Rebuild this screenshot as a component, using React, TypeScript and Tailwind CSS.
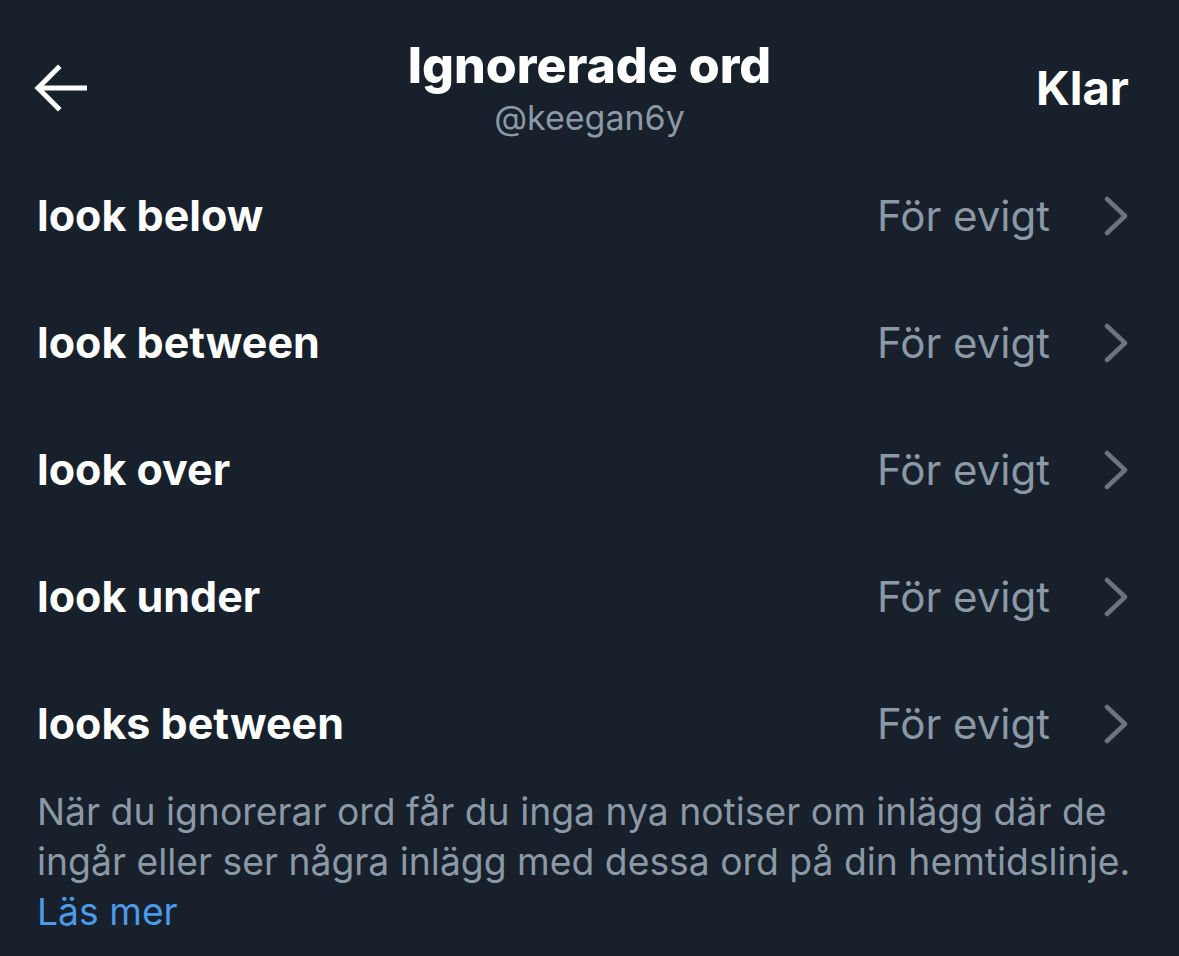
const words = ['look below', 'look between', 'look over', 'look under', 'looks between']

function BackArrow() {
  return (
    <svg width="56" height="48" viewBox="0 0 56 48" fill="none" className="text-white">
      <path d="M4 24H54" stroke="currentColor" strokeWidth="5" />
      <path d="M25 4L5 24L25 44" stroke="currentColor" strokeWidth="5" strokeLinecap="square" />
    </svg>
  )
}

function Chevron() {
  return (
    <svg width="26" height="40" viewBox="0 0 26 40" fill="none" className="text-[#6b7580]">
      <path
        d="M4 3L22 20L4 37"
        stroke="currentColor"
        strokeWidth="4.5"
        strokeLinecap="round"
        strokeLinejoin="round"
      />
    </svg>
  )
}

function WordRow({ word }: { word: string }) {
  return (
    <div className="flex h-[127px] items-center justify-between pl-[37px] pr-[50px]">
      <span className="text-[43px] font-bold leading-none text-white">{word}</span>
      <div className="flex items-center gap-[53px]">
        <span className="text-[42px] leading-none text-[#8b98a5]">För evigt</span>
        <Chevron />
      </div>
    </div>
  )
}

export default function App() {
  return (
    <div
      className="h-[956px] w-[1179px] overflow-hidden bg-[#17202b] text-white"
      style={{ fontFamily: 'Inter, "Liberation Sans", sans-serif' }}
    >
      <header className="grid h-[152px] grid-cols-[1fr_auto_1fr]">
        <div className="flex items-start pl-[33px] pt-[64px]">
          <BackArrow />
        </div>
        <div className="flex flex-col items-center pt-[37px]">
          <h1 className="text-[50px] font-extrabold leading-[56px]">Ignorerade ord</h1>
          <p className="mt-[5px] text-[34px] leading-[40px] text-[#8b98a5]">@keegan6y</p>
        </div>
        <div className="flex items-start justify-end pr-[50px] pt-[60px]">
          <span className="text-[47px] font-bold leading-[56px]">Klar</span>
        </div>
      </header>

      <div>
        {words.map((w) => (
          <WordRow key={w} word={w} />
        ))}
      </div>

      <p className="px-[37px] text-[37.3px] leading-[50px] text-[#8b98a5]">
        När du ignorerar ord får du inga nya notiser om inlägg där de
        <br />
        ingår eller ser några inlägg med dessa ord på din hemtidslinje.
        <br />
        <span className="text-[#4b9ae8]">Läs mer</span>
      </p>
    </div>
  )
}
